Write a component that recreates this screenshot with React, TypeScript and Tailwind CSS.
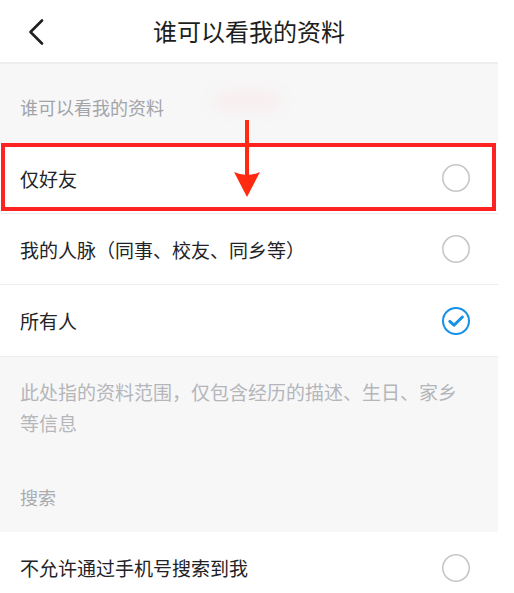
import React from "react";

const font = { fontFamily: '"Noto Sans CJK SC", "Noto Sans", sans-serif' };

function Radio({ checked }: { checked?: boolean }) {
  if (checked) {
    return (
      <svg width="30" height="30" viewBox="0 0 30 30" className="block">
        <circle cx="15" cy="15" r="13" fill="none" stroke="#1591e6" strokeWidth="2" />
        <path d="M8.8 15.4 L13 19.2 L21.4 11" fill="none" stroke="#1591e6" strokeWidth="3" strokeLinecap="round" strokeLinejoin="round" />
      </svg>
    );
  }
  return (
    <svg width="30" height="30" viewBox="0 0 30 30" className="block">
      <circle cx="15" cy="15" r="13.2" fill="none" stroke="#c7c7c9" strokeWidth="1.6" />
    </svg>
  );
}

function Row({
  label,
  checked,
  last,
  children,
}: {
  label: string;
  checked?: boolean;
  last?: boolean;
  children?: React.ReactNode;
}) {
  return (
    <div
      className={
        "relative flex h-[71px] items-center justify-between bg-white pl-[20px] pr-[27px] " +
        (last ? "" : "border-b border-[#ececee]")
      }
    >
      <span className="text-[19px] leading-none text-[#222326]">{label}</span>
      <Radio checked={checked} />
      {children}
    </div>
  );
}

export default function App() {
  return (
    <div className="h-[593px] w-[514px] overflow-hidden bg-white" style={font}>
      <div className="relative w-[498px]">
        {/* header */}
        <div className="relative flex h-[64px] items-center justify-center border-b-2 border-[#eceef0] bg-white">
          <svg width="18" height="28" viewBox="0 0 18 28" className="absolute left-[27px] top-[18px]">
            <path d="M15 2.5 L3.5 14 L15 25.5" fill="none" stroke="#1f1f1f" strokeWidth="2.6" strokeLinecap="round" strokeLinejoin="round" />
          </svg>
          <span className="text-[24px] leading-none text-[#1d1e20]">谁可以看我的资料</span>
        </div>

        {/* section label */}
        <div className="flex h-[79px] items-center bg-[#f7f7f8] pl-[20px] pt-[6px]">
          <span className="text-[18px] leading-none text-[#a2a4a8]">谁可以看我的资料</span>
        </div>

        <Row label="仅好友">
          <div className="absolute left-[1px] top-0 h-[68px] w-[495px] border-4 border-[#ff2222]" />
        </Row>
        <Row label="我的人脉（同事、校友、同乡等）" />
        <Row label="所有人" checked last />

        {/* note */}
        <div className="border-t border-[#ececee] bg-[#f7f7f8] pl-[20px] pr-[30px] pt-[19px]">
          <p className="text-[19px] leading-[31px] text-[#b4b6ba]">
            此处指的资料范围，仅包含经历的描述、生日、家乡等信息
          </p>
          <div className="flex h-[94px] items-end pb-[26px]">
            <span className="text-[18px] leading-none text-[#a9abaf]">搜索</span>
          </div>
        </div>

        <Row label="不允许通过手机号搜索到我" last />

        {/* annotation: faint blur + arrow */}
        <div className="pointer-events-none absolute left-[212px] top-[92px] h-[18px] w-[70px] rounded-full bg-[#ff9a90] opacity-10 blur-[8px]" />
        <svg width="30" height="82" viewBox="0 0 30 82" className="pointer-events-none absolute left-[232px] top-[118px]">
          <path d="M15 2 L15 64" stroke="#ff2a10" strokeWidth="4" strokeLinecap="butt" />
          <path d="M2 54 Q15 60 28 54 L15 79 Z" fill="#ff2a10" />
        </svg>
      </div>
    </div>
  );
}
